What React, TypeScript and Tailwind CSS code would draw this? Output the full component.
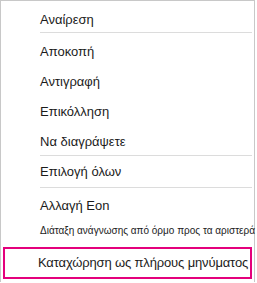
import React from 'react';

// each row is 30px tall; spacing around separators is tuned by hand
type Entry = { label: string; sep?: string };

const entries: Entry[] = [
  { label: 'Αναίρεση', sep: '-mt-[3px] mb-[4px]' },
  { label: 'Αποκοπή' },
  { label: 'Αντιγραφή' },
  { label: 'Επικόλληση' },
  { label: 'Να διαγράψετε', sep: '-mt-[2px] mb-[1px]' },
  { label: 'Επιλογή όλων', sep: 'mb-[3px]' },
  { label: 'Αλλαγή Eon' },
];

export default function App() {
  return (
    <div className="w-[257px] h-[283px] bg-white font-['Liberation_Sans',Arial,sans-serif] text-[#1b1b1b]">
      <div className="w-[255px] h-[282px] border border-[#c8c8c8] border-b-0 pt-[4px] flex flex-col">
        {entries.map((e) => (
          <div key={e.label} className="flex flex-col">
            <div className="h-[30px] flex items-center pl-[39px] text-[13px] whitespace-nowrap">{e.label}</div>
            {e.sep && <div className={`ml-[39px] mr-[2px] h-px bg-[#dcdcdc] ${e.sep}`} />}
          </div>
        ))}
        <div className="mt-px h-[16px] flex items-center pl-[39px] text-[10px] whitespace-nowrap">
          Διάταξη ανάγνωσης από όρμο προς τα αριστερά
        </div>
        <div className="mx-[2px] mt-[9px] h-[32px] border-2 border-[#e4007c] flex items-center pl-[33px] text-[13px] tracking-[-0.15px] whitespace-nowrap">
          Καταχώρηση ως πλήρους μηνύματος
        </div>
      </div>
    </div>
  );
}
